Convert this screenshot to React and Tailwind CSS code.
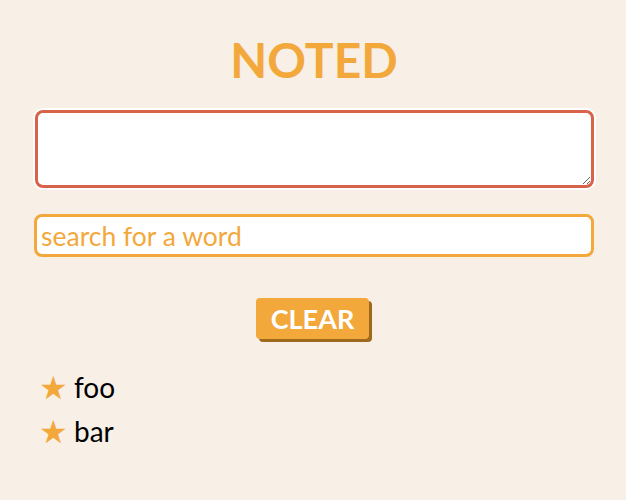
export default function App() {
  return (
    <div className="min-h-[500px] bg-[#f8efe6] pl-[34px] pr-[32px] pt-[36px] font-['Lato',sans-serif]">
      <h1 className="text-center text-[48px] font-bold leading-none text-[#f3a83b]">NOTED</h1>
      <textarea
        className="mt-[26px] ml-px block h-[78px] w-[calc(100%-1px)] resize-y rounded-[8px] border-[3px] border-[#d9634a] bg-white px-2 py-1 text-[22px] outline-none ring-2 ring-white"
      />
      <input
        type="text"
        placeholder="search for a word"
        className="mt-[26px] block h-[43px] w-full rounded-[8px] border-[3px] border-[#f3a83b] bg-white px-[4px] text-[26.5px] text-[#f3a83b] outline-none placeholder:text-[#f3a83b]"
      />
      <div className="mt-[41px] flex justify-center pr-[3px]">
        <button className="h-[41px] w-[113px] rounded-[4px] bg-[#f3a83b] text-[27px] font-bold leading-none text-white shadow-[3px_3px_0_#a06a1e]">
          CLEAR
        </button>
      </div>
      <ul className="mt-[30px] flex flex-col gap-[8px] pl-[5px]">
        <li className="flex items-center gap-[6px] text-[28px] leading-[36px] text-black">
          <span className="text-[32px] leading-[36px] text-[#f3a83b]">★</span>
          <span>foo</span>
        </li>
        <li className="flex items-center gap-[6px] text-[28px] leading-[36px] text-black">
          <span className="text-[32px] leading-[36px] text-[#f3a83b]">★</span>
          <span>bar</span>
        </li>
      </ul>
    </div>
  );
}
